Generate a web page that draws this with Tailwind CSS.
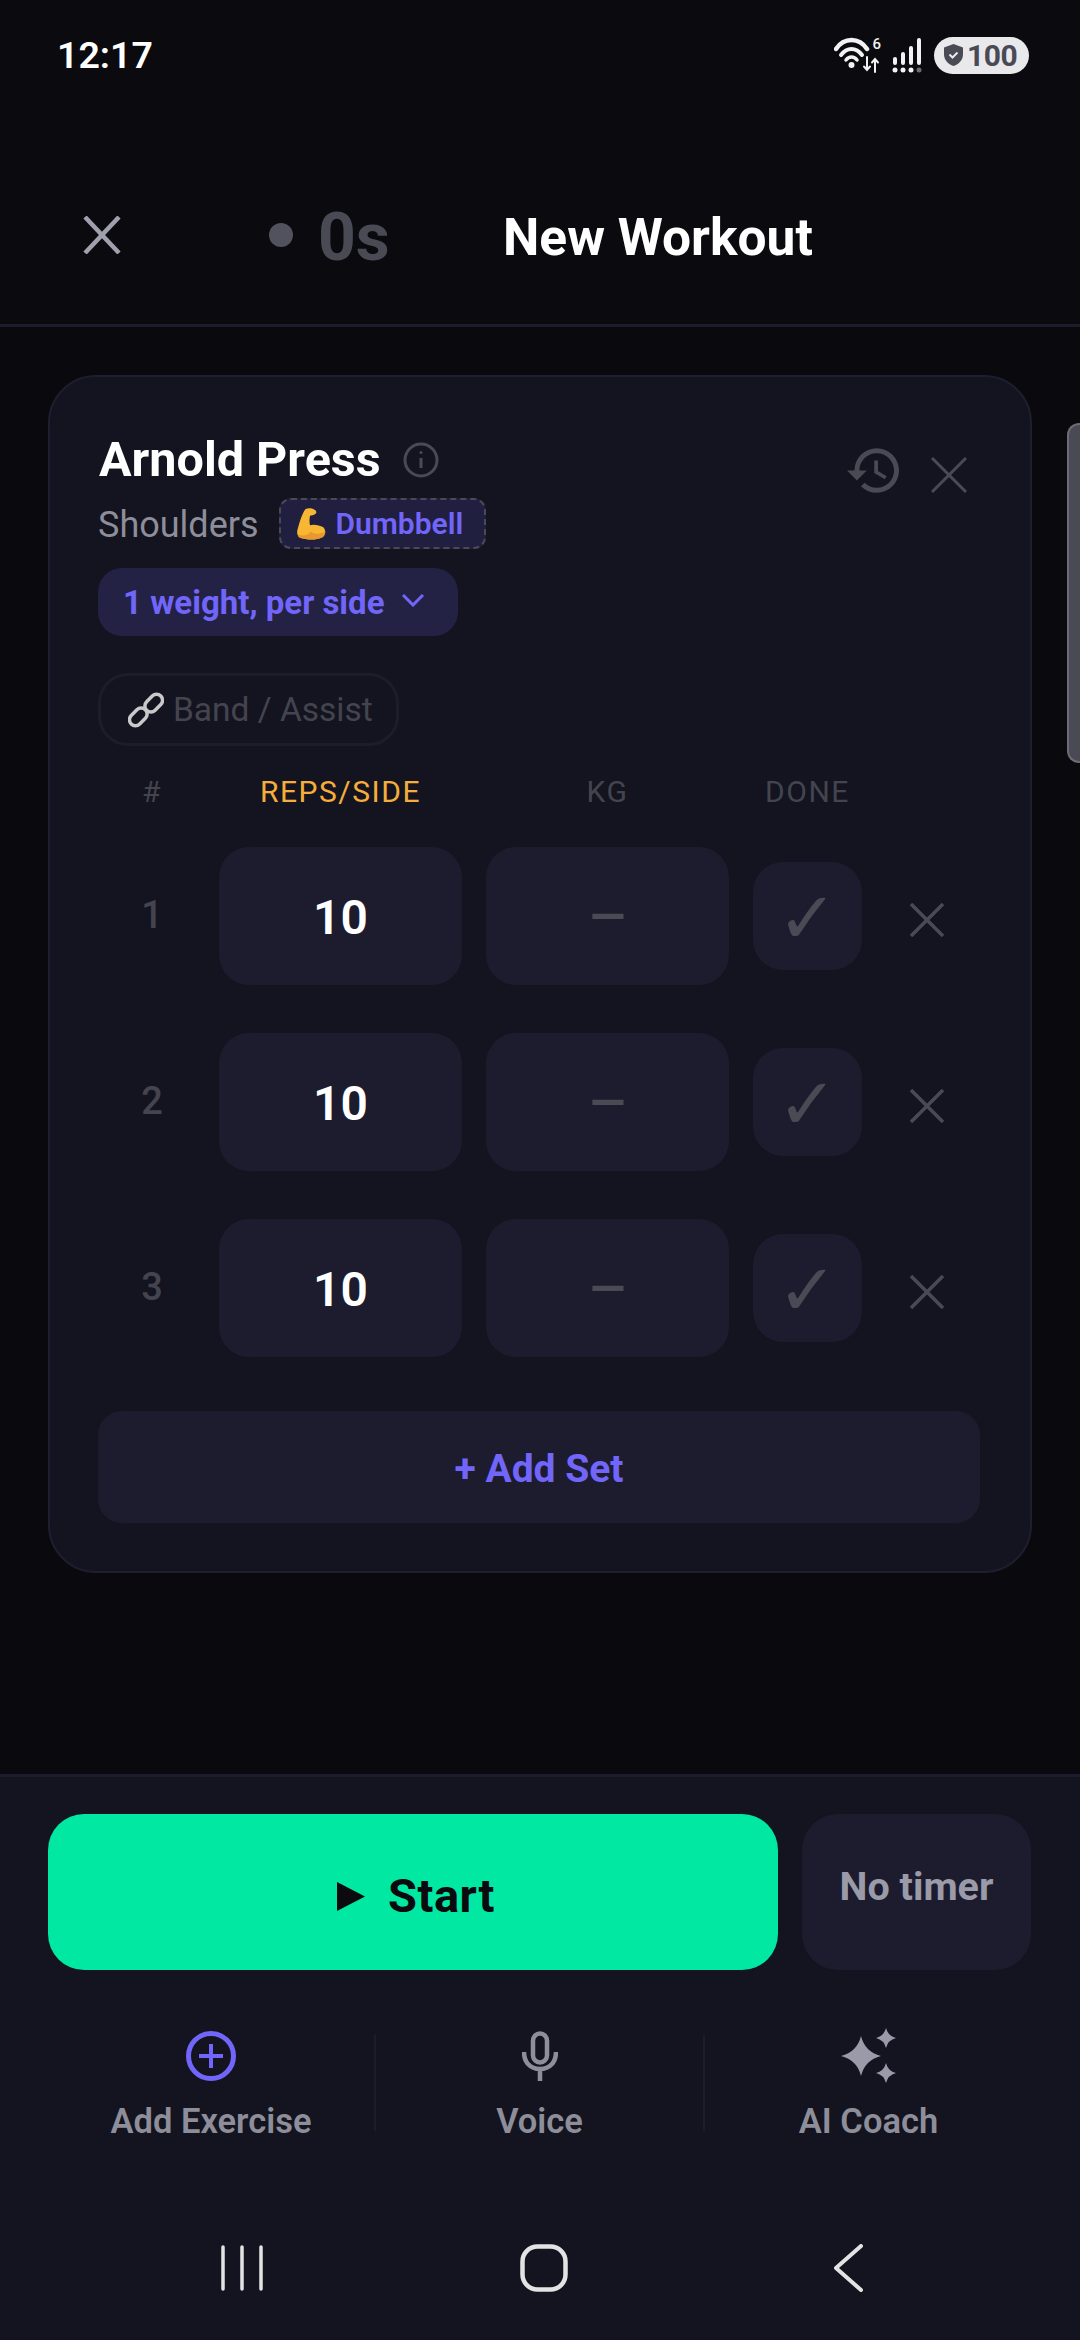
<!DOCTYPE html>
<html lang="en">
  <head>
    <meta charset="UTF-8" />
    <meta name="viewport" content="width=device-width, initial-scale=1.0" />
    <title>New Workout</title>
    <script src="https://cdn.jsdelivr.net/npm/@tailwindcss/browser@4"></script>
  </head>
  <body class="bg-[#0a0a0f] font-[Roboto,sans-serif]">
    <div class="relative flex h-[2340px] w-[1080px] flex-col overflow-hidden bg-[#09090e]">
      <!-- Status bar -->
      <div class="flex h-[80px] shrink-0 items-end justify-between bg-[#0a0a0f] pr-[51px] pl-[57px]">
        <span class="text-[37.5px] leading-[50px] font-semibold text-white">12:17</span>
        <div class="flex h-[50px] items-center">
          <svg width="54" height="38" viewBox="0 0 54 38" fill="none" stroke="#f2f2f2" stroke-linecap="round">
            <path d="M2 13C10 1 25 1 33 13" stroke-width="4.500" />
            <path d="M7 19C13 11 22 11 28 19" stroke-width="4" />
            <path d="M12 24C15 20 20 20 23 24" stroke-width="3.500" />
            <circle cx="17.500" cy="29" r="3" fill="#f2f2f2" stroke="none" />
            <path d="M33 21V34M30 30.500L33 34L36 30.500M41 36V23M38 26.500L41 23L44 26.500" stroke-width="2" />
          </svg>
          <span class="mb-[22px] -ml-[16px] text-[15px] leading-[15px] font-medium text-[#f2f2f2]">6</span>
          <svg class="ml-[11px]" width="32" height="36" viewBox="0 0 32 36" fill="#f2f2f2">
            <rect x="1" y="20" width="4" height="8" rx="2" />
            <rect x="9" y="15" width="4" height="13" rx="2" />
            <rect x="17" y="9" width="4" height="19" rx="2" />
            <rect x="25" y="1" width="4" height="27" rx="2" />
            <circle cx="3" cy="33" r="2.500" />
            <circle cx="11" cy="33" r="2.500" />
            <circle cx="19" cy="33" r="2.500" />
            <circle cx="27" cy="33" r="2.500" fill="#6b6b75" />
          </svg>
          <div class="ml-[10px] flex h-[37px] w-[95px] items-center rounded-full bg-[#e9e9ec] pl-[10px]">
            <svg width="19" height="22" viewBox="0 0 19 22">
              <path d="M9.500 0L19 3.500V10C19 16 15 20 9.500 22C4 20 0 16 0 10V3.500Z" fill="#4a4a55" />
              <path d="M5.500 10.500L8.500 13.500L13.500 8.500" fill="none" stroke="#e9e9ec" stroke-width="2" />
            </svg>
            <span class="ml-[4px] text-[30px] leading-[37px] font-bold tracking-[-0.5px] text-[#4a4a55]">100</span>
          </div>
        </div>
      </div>

      <!-- Header -->
      <div class="flex h-[247px] shrink-0 items-center border-b-[3px] border-[#1c1c2e] bg-[#0a0a0f] pt-[65px] pl-[83px]">
        <svg width="38" height="38" viewBox="0 0 38 38" stroke="#a0a0ad" stroke-width="4.500" fill="none">
          <path d="M2 1L36 37M36 1L2 37" />
        </svg>
        <span class="ml-[148px] h-[24px] w-[24px] rounded-full bg-[#52525e]"></span>
        <span class="ml-[25px] w-[70px] pt-[6px] text-[66px] leading-[70px] font-bold whitespace-nowrap text-[#4a4a55]">0s</span>
        <span class="ml-[115px] pt-[6px] text-[51.5px] leading-[60px] font-bold text-white">New Workout</span>
      </div>

      <!-- Workout list -->
      <main class="flex-1 px-[48px] pt-[48px]">
        <section class="h-[1198px] rounded-[48px] border-2 border-[#1e1e30] bg-[#13141f] p-[48px]">
          <div class="flex h-[70px] items-start">
            <h2 class="ml-[1px] text-[48.5px] leading-[70px] font-bold text-white">Arnold Press</h2>
            <svg class="mt-[17px] ml-[22px]" width="36" height="36" viewBox="0 0 36 36" fill="none" stroke="#4a4a55" stroke-width="3">
              <circle cx="18" cy="18" r="16" />
              <path d="M18 16V26" />
              <circle cx="18" cy="10.500" r="1.500" fill="#4a4a55" stroke="none" />
            </svg>
            <svg class="mt-[23px] ml-auto" width="52" height="45" viewBox="1 3 21 18" fill="#4a4a55">
              <path d="M13 3a9 9 0 0 0-9 9H1l3.890 3.890.070.140L9 12H6c0-3.870 3.130-7 7-7s7 3.130 7 7-3.130 7-7 7c-1.930 0-3.680-.790-4.940-2.060l-1.420 1.420A8.954 8.954 0 0 0 13 21a9 9 0 0 0 0-18zm-1 5v5l4.280 2.540.720-1.210-3.500-2.080V8H12z" />
            </svg>
            <svg class="mt-[32px] mr-[15px] ml-[32px]" width="36" height="36" viewBox="0 0 36 36" stroke="#4a4a55" stroke-width="3" fill="none">
              <path d="M1 1L35 35M35 1L1 35" />
            </svg>
          </div>
          <div class="flex h-[57px] items-center">
            <span class="pt-[3px] text-[36px] leading-[57px] text-[#8e8e9a]">Shoulders</span>
            <div class="ml-[20px] flex h-[51px] w-[207px] items-center rounded-[12px] border-2 border-dashed border-[#4a4a55] bg-[#211f3f] pl-[15px]">
              <svg width="31" height="33" viewBox="30 30 93 98">
                <path d="M58 36C68 30 88 34 91 44C92 50 84 54 72 56C70 66 70 76 72 84C84 80 100 84 112 90C120 98 120 116 106 122C90 130 60 128 42 122C32 116 32 104 36 92C42 72 48 50 58 36Z" fill="#f7b733" />
                <path d="M36 112C50 118 64 116 74 104C86 112 102 112 118 102C119 110 114 118 106 122C90 130 60 128 42 122C38 120 36 116 36 112Z" fill="#e8982e" />
              </svg>
              <span class="ml-[9px] text-[30px] leading-[40px] font-semibold text-[#7166f9]">Dumbbell</span>
            </div>
          </div>
          <button class="mt-[16px] flex h-[68px] w-[360px] items-center rounded-[24px] bg-[#232244] pl-[25px]">
            <span class="pt-[1px] text-[33px] leading-[68px] font-bold text-[#7166f9]">1 weight, per side</span>
            <svg class="mt-[-4px] ml-[17px]" width="22" height="13" viewBox="0 0 22 13" fill="none" stroke="#7166f9" stroke-width="3">
              <path d="M1 1L11 11L21 1" />
            </svg>
          </button>
          <div class="mt-[37px] flex h-[73px] w-[301px] items-center rounded-[30px] border-[3px] border-[#1c1c2b] pl-[27px]">
            <svg width="36" height="36" viewBox="0 0 36 36" fill="none" stroke="#c9c9cc" stroke-width="3.500">
              <rect x="15" y="3" width="20" height="12" rx="6" transform="rotate(-45 25 9) translate(-1 2)" />
              <rect x="1" y="21" width="20" height="12" rx="6" transform="rotate(-45 11 27) translate(1 -2)" />
            </svg>
            <span class="ml-[9px] text-[33.5px] leading-[50px] text-[#44444f]">Band / Assist</span>
          </div>

          <!-- Sets table -->
          <div class="mt-[25px] flex h-[42px] items-center text-[30px] leading-[42px] tracking-[1.5px]">
            <span class="w-[108px] text-center text-[#44444f]">#</span>
            <span class="ml-[13px] w-[243px] text-center text-[#f5ad3c]">REPS/SIDE</span>
            <span class="ml-[24px] w-[243px] text-center text-[#44444f]">KG</span>
            <span class="ml-[24px] w-[109px] text-center whitespace-nowrap text-[#44444f]">DONE</span>
          </div>

          <div class="mt-[34px] flex h-[138px] items-center">
            <span class="w-[108px] pb-[2px] text-center text-[38px] leading-[50px] font-medium text-[#44444f]">1</span>
            <div class="ml-[13px] flex h-[138px] w-[243px] items-center justify-center rounded-[30px] bg-[#1c1c2e] pt-[3px] text-[48px] font-semibold text-white">10</div>
            <div class="ml-[24px] flex h-[138px] w-[243px] items-center justify-center rounded-[30px] bg-[#1c1c2e] pt-[3px] text-[46px] font-bold text-[#4a4a55]">—</div>
            <div class="ml-[24px] flex h-[108px] w-[109px] items-center justify-center rounded-[30px] bg-[#1c1c2e] pt-[3px] font-['DejaVu_Sans'] text-[72px] font-bold text-[#4a4a55]">✓</div>
            <svg class="mt-[8px] ml-[48px]" width="34" height="34" viewBox="0 0 34 34" stroke="#4a4a55" stroke-width="3.500" fill="none">
              <path d="M1 1L33 33M33 1L1 33" />
            </svg>
          </div>
          <div class="mt-[48px] flex h-[138px] items-center">
            <span class="w-[108px] pb-[2px] text-center text-[38px] leading-[50px] font-medium text-[#44444f]">2</span>
            <div class="ml-[13px] flex h-[138px] w-[243px] items-center justify-center rounded-[30px] bg-[#1c1c2e] pt-[3px] text-[48px] font-semibold text-white">10</div>
            <div class="ml-[24px] flex h-[138px] w-[243px] items-center justify-center rounded-[30px] bg-[#1c1c2e] pt-[3px] text-[46px] font-bold text-[#4a4a55]">—</div>
            <div class="ml-[24px] flex h-[108px] w-[109px] items-center justify-center rounded-[30px] bg-[#1c1c2e] pt-[3px] font-['DejaVu_Sans'] text-[72px] font-bold text-[#4a4a55]">✓</div>
            <svg class="mt-[8px] ml-[48px]" width="34" height="34" viewBox="0 0 34 34" stroke="#4a4a55" stroke-width="3.500" fill="none">
              <path d="M1 1L33 33M33 1L1 33" />
            </svg>
          </div>
          <div class="mt-[48px] flex h-[138px] items-center">
            <span class="w-[108px] pb-[2px] text-center text-[38px] leading-[50px] font-medium text-[#44444f]">3</span>
            <div class="ml-[13px] flex h-[138px] w-[243px] items-center justify-center rounded-[30px] bg-[#1c1c2e] pt-[3px] text-[48px] font-semibold text-white">10</div>
            <div class="ml-[24px] flex h-[138px] w-[243px] items-center justify-center rounded-[30px] bg-[#1c1c2e] pt-[3px] text-[46px] font-bold text-[#4a4a55]">—</div>
            <div class="ml-[24px] flex h-[108px] w-[109px] items-center justify-center rounded-[30px] bg-[#1c1c2e] pt-[3px] font-['DejaVu_Sans'] text-[72px] font-bold text-[#4a4a55]">✓</div>
            <svg class="mt-[8px] ml-[48px]" width="34" height="34" viewBox="0 0 34 34" stroke="#4a4a55" stroke-width="3.500" fill="none">
              <path d="M1 1L33 33M33 1L1 33" />
            </svg>
          </div>

          <button class="mt-[54px] flex h-[112px] w-[882px] items-center justify-center rounded-[24px] bg-[#1c1c2e] pt-[5px] text-[39px] font-bold text-[#7166f9]">+ Add Set</button>
        </section>
      </main>

      <!-- Scroll indicator over the list -->
      <div class="absolute top-[423px] right-0 h-[340px] w-[13px] rounded-l-[12px] border-2 border-r-0 border-[#6b6b75] bg-[#4a4a55]"></div>

      <!-- Footer -->
      <footer class="h-[566px] shrink-0 border-t-[3px] border-[#1c1c2e] bg-[#13141f] px-[48px] pt-[37px]">
        <div class="flex gap-[24px]">
          <button class="flex h-[156px] w-[730px] items-center justify-center rounded-[36px] bg-[#00e8a2] pt-[8px] pl-[6px] text-[#0a0a0f]">
            <svg width="28" height="29" viewBox="0 0 28 29" fill="#0a0a0f"><path d="M0 0L28 14.500L0 29Z" /></svg>
            <span class="ml-[23px] text-[47px] leading-[50px] font-bold tracking-[0.5px]">Start</span>
          </button>
          <button class="flex h-[156px] w-[229px] items-center justify-center rounded-[36px] bg-[#1c1c2e] pb-[10px] text-[39.5px] leading-[50px] font-bold text-[#9a9aa8]">No timer</button>
        </div>

        <div class="mt-[58px] flex items-start">
          <div class="flex w-[326px] flex-col items-center">
            <div class="flex h-[56px] items-center">
              <svg width="50" height="50" viewBox="0 0 50 50" fill="none" stroke="#7166f9" stroke-width="5">
                <circle cx="25" cy="25" r="22.500" />
                <path d="M25 13V37M13 25H37" stroke-width="4" />
              </svg>
            </div>
            <span class="mt-[17px] text-[34.5px] leading-[40px] font-semibold text-[#8e8e9a]">Add Exercise</span>
          </div>
          <div class="mt-[7px] h-[96px] w-[2px] bg-[#1c1c2b]"></div>
          <div class="flex w-[327px] flex-col items-center">
            <div class="flex h-[56px] items-center">
              <svg width="36" height="50" viewBox="0 0 36 50" fill="none" stroke="#8e8e9a" stroke-width="4.500">
                <rect x="11" y="2.500" width="14" height="29" rx="7" />
                <path d="M2 21C2 31 8 38 18 38C28 38 34 31 34 21M18 38V50" />
              </svg>
            </div>
            <span class="mt-[17px] text-[34.5px] leading-[40px] font-semibold text-[#8e8e9a]">Voice</span>
          </div>
          <div class="mt-[7px] h-[96px] w-[2px] bg-[#1c1c2b]"></div>
          <div class="flex w-[327px] flex-col items-center">
            <div class="flex h-[56px] items-center">
              <svg width="56" height="56" viewBox="0 0 56 56" fill="#9a9aa8">
                <path d="M20 8Q24 24 40 28Q24 32 20 48Q16 32 0 28Q16 24 20 8Z" />
                <path d="M45 0Q47 8 55 10Q47 12 45 20Q43 12 35 10Q43 8 45 0Z" />
                <path d="M45 35Q47 43 55 45Q47 47 45 55Q43 47 35 45Q43 43 45 35Z" />
              </svg>
            </div>
            <span class="mt-[17px] text-[34.5px] leading-[40px] font-semibold text-[#8e8e9a]">AI Coach</span>
          </div>
        </div>

        <!-- System navigation -->
        <nav class="mt-[103px] flex items-center pl-[172px]">
          <svg width="44" height="48" viewBox="0 0 44 48" fill="none" stroke="#e3e3e3" stroke-width="3.500" stroke-linecap="round">
            <path d="M3 3V45M22 3V45M41 3V45" />
          </svg>
          <svg class="ml-[256px]" width="48" height="48" viewBox="0 0 48 48" fill="none" stroke="#e3e3e3" stroke-width="4.500">
            <rect x="2.500" y="2.500" width="43" height="43" rx="15" />
          </svg>
          <svg class="ml-[265px]" width="30" height="48" viewBox="0 0 30 48" fill="none" stroke="#e3e3e3" stroke-width="4" stroke-linecap="round" stroke-linejoin="round">
            <path d="M28 2L3 24L28 46" />
          </svg>
        </nav>
      </footer>
    </div>
  </body>
</html>
